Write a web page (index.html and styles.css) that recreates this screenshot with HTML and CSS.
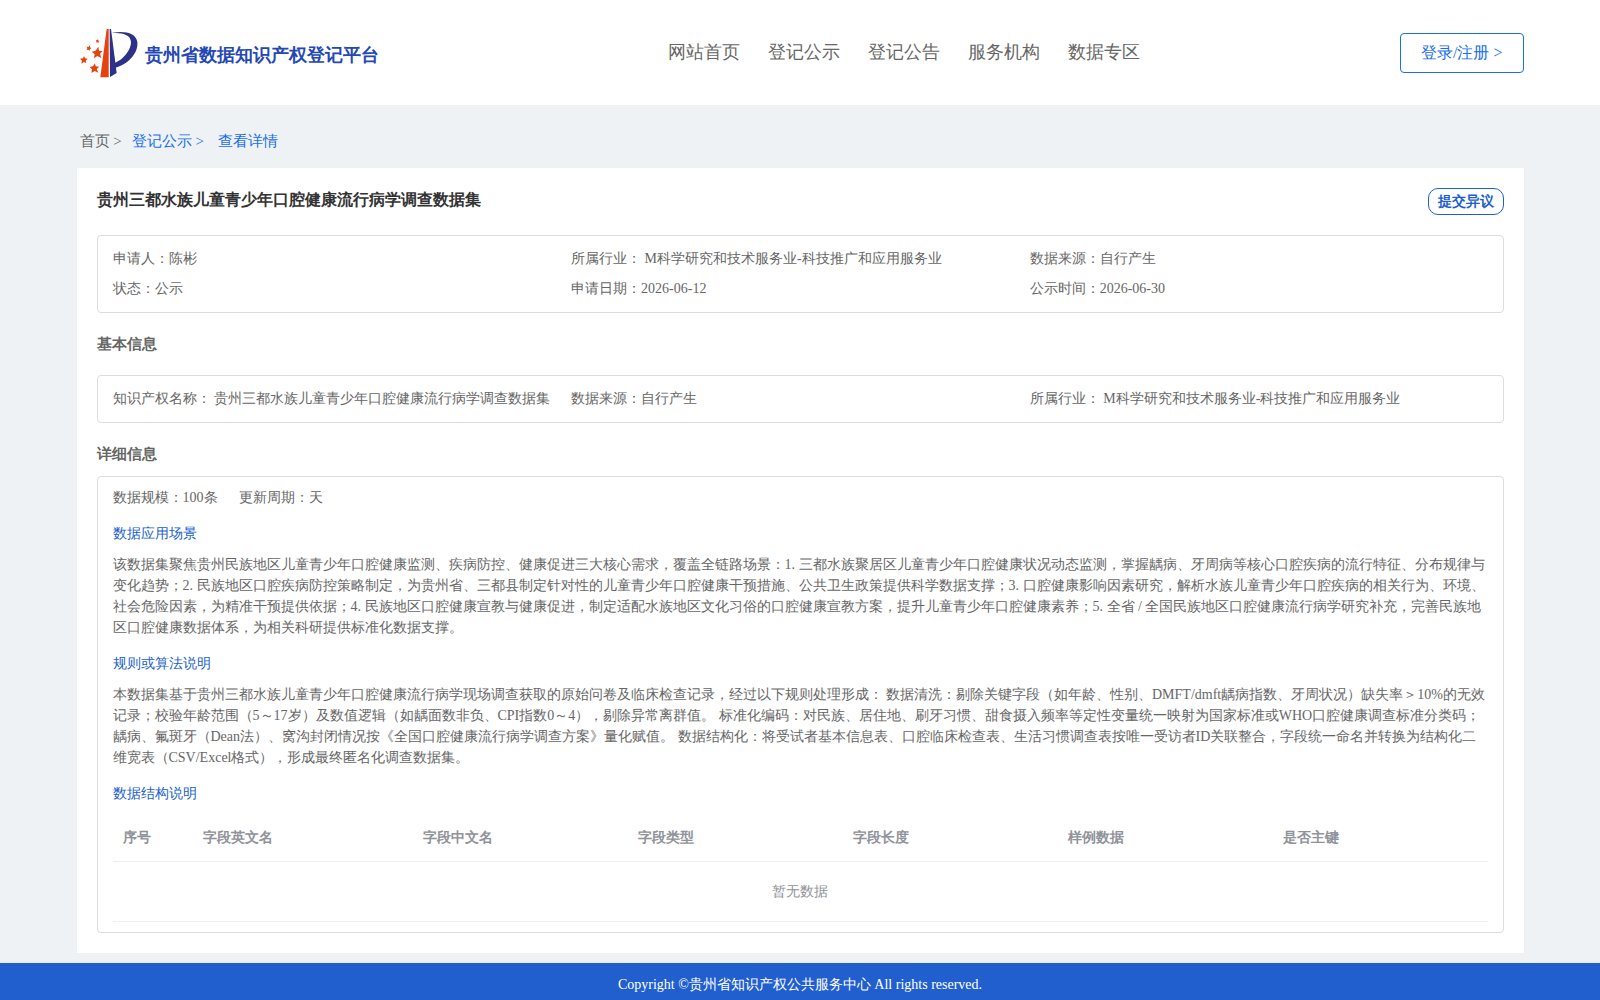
FILE: index.html
```html
<!DOCTYPE html>
<html lang="zh">
<head>
<meta charset="utf-8">
<title>贵州省数据知识产权登记平台</title>
<link rel="stylesheet" href="styles.css">
</head>
<body>
<header class="header">
  <div class="brand">
    <svg class="logo" viewBox="30 24 180 150">
      <path fill="#e5420f" d="M110 27h6v145H91z"/>
      <path fill="#2b3288" d="M119 27h4l17 132-20 12z"/>
      <path fill="#2b3288" d="M128 38C165 32 196 38 202 65C206 99 174 133 134 144V129C162 117 184 88 183 65C181 45 160 37 128 39z"/>
      <g fill="#e5420f">
        <path d="M85 80l2 12 11 1-8 8 4 13-12-6-10 7 2-13-9-7 12-3z"/>
        <path d="M75 130l2 9 11 1-8 7 5 11-11-5-10 6 2-11-7-7 10-2z"/>
        <path d="M42 108l3 7 8 1-6 6 2 8-7-4-8 5 2-9-6-6 9-1z"/>
        <path d="M60 76l0 6 4 3-4 2-1 5-4-3-5 1 2-5-2-5 5 1z"/>
        <path d="M84 58l1 4h3l-2 3v3l-4-1-3 1v-4l-1-3 3-1z"/>
      </g>
    </svg>
    <span class="brand-name">贵州省数据知识产权登记平台</span>
  </div>
  <nav class="nav"><a>网站首页</a><a>登记公示</a><a>登记公告</a><a>服务机构</a><a>数据专区</a></nav>
  <a class="login">登录/注册 &gt;</a>
</header>
<main class="main">
  <div class="crumbs"><span>首页 &gt;</span><a class="crumb-parent">登记公示 &gt;</a><a class="crumb-current">查看详情</a></div>
  <section class="card">
    <div class="card-head"><h1 class="title">贵州三都水族儿童青少年口腔健康流行病学调查数据集</h1><a class="objection">提交异议</a></div>
    <div class="box summary">
      <div>申请人：陈彬</div><div>所属行业： M科学研究和技术服务业-科技推广和应用服务业</div><div>数据来源：自行产生</div>
      <div>状态：公示</div><div>申请日期：2026-06-12</div><div>公示时间：2026-06-30</div>
    </div>
    <h2 class="section basic">基本信息</h2>
    <div class="box summary">
      <div>知识产权名称： 贵州三都水族儿童青少年口腔健康流行病学调查数据集</div><div>数据来源：自行产生</div><div>所属行业： M科学研究和技术服务业-科技推广和应用服务业</div>
    </div>
    <h2 class="section detail">详细信息</h2>
    <div class="box details">
      <div class="scale"><span>数据规模：100条</span><span>更新周期：天</span></div>
      <h3 class="sub">数据应用场景</h3>
      <p class="text">该数据集聚焦贵州民族地区儿童青少年口腔健康监测、疾病防控、健康促进三大核心需求，覆盖全链路场景：1. 三都水族聚居区儿童青少年口腔健康状况动态监测，掌握龋病、牙周病等核心口腔疾病的流行特征、分布规律与变化趋势；2. 民族地区口腔疾病防控策略制定，为贵州省、三都县制定针对性的儿童青少年口腔健康干预措施、公共卫生政策提供科学数据支撑；3. 口腔健康影响因素研究，解析水族儿童青少年口腔疾病的相关行为、环境、社会危险因素，为精准干预提供依据；4. 民族地区口腔健康宣教与健康促进，制定适配水族地区文化习俗的口腔健康宣教方案，提升儿童青少年口腔健康素养；5. 全省 / 全国民族地区口腔健康流行病学研究补充，完善民族地区口腔健康数据体系，为相关科研提供标准化数据支撑。</p>
      <h3 class="sub">规则或算法说明</h3>
      <p class="text">本数据集基于贵州三都水族儿童青少年口腔健康流行病学现场调查获取的原始问卷及临床检查记录，经过以下规则处理形成： 数据清洗：剔除关键字段（如年龄、性别、DMFT/dmft龋病指数、牙周状况）缺失率＞10%的无效记录；校验年龄范围（5～17岁）及数值逻辑（如龋面数非负、CPI指数0～4），剔除异常离群值。 标准化编码：对民族、居住地、刷牙习惯、甜食摄入频率等定性变量统一映射为国家标准或WHO口腔健康调查标准分类码；龋病、氟斑牙（Dean法）、窝沟封闭情况按《全国口腔健康流行病学调查方案》量化赋值。 数据结构化：将受试者基本信息表、口腔临床检查表、生活习惯调查表按唯一受访者ID关联整合，字段统一命名并转换为结构化二维宽表（CSV/Excel格式），形成最终匿名化调查数据集。</p>
      <h3 class="sub">数据结构说明</h3>
      <div class="table">
        <div class="thead"><span>序号</span><span>字段英文名</span><span>字段中文名</span><span>字段类型</span><span>字段长度</span><span>样例数据</span><span>是否主键</span></div>
        <div class="empty">暂无数据</div>
      </div>
    </div>
  </section>
</main>
<footer class="footer">Copyright ©贵州省知识产权公共服务中心 All rights reserved.</footer>
</body>
</html>
```
FILE: styles.css
```css
* { box-sizing: border-box; }
body { margin: 0; height: 1000px; overflow: hidden; background: #eef2f5; color: #666; font-family: "Liberation Serif", serif; font-size: 14px; line-height: 21px; }
h1, h2, h3, p { margin: 0; }
.header { height: 105px; background: #fff; display: grid; grid-template-columns: 588px 1fr 124px; padding: 0 76px 0 80px; align-items: start; }
.brand { display: flex; gap: 5px; padding-top: 28px; }
.logo { width: 60px; height: 50px; flex: none; }
.brand-name { font-size: 18px; font-weight: bold; color: #2448b5; line-height: 26px; padding-top: 14px; }
.nav { display: flex; gap: 28px; font-size: 18px; line-height: 26px; padding-top: 39px; color: #666; }
.login { height: 40px; margin-top: 33px; border: 1px solid #186eed; border-radius: 4px; color: #186eed; font-size: 16px; line-height: 38px; padding-left: 20px; }
.main { padding: 0 76.5px; height: 858px; }
.crumbs { height: 63px; padding: 26px 0 0 3px; font-size: 15px; display: flex; color: #666; }
.crumbs a { color: #186eed; }
.crumb-parent { margin-left: 10px; }
.crumb-current { margin-left: 14.5px; }
.card { height: 785px; background: #fff; padding: 20px 20px 0; }
.card-head { display: flex; justify-content: space-between; height: 47px; align-items: flex-start; }
.title { font-size: 16px; line-height: 24px; color: #333; }
.objection { width: 76px; height: 27px; border: 1px solid #215fce; border-radius: 10px; color: #215fce; font-weight: bold; text-align: center; line-height: 25px; }
.box { border: 1px solid #ddd; border-radius: 4px; padding: 0 15px; }
.summary { display: grid; grid-template-columns: 458.6px 458.6px 1fr; grid-auto-rows: 30px; padding-top: 12px; padding-bottom: 4px; white-space: nowrap; }
.section { font-size: 15px; line-height: 22px; color: #666; }
.basic { height: 62px; padding-top: 20px; }
.detail { height: 53px; padding-top: 20px; }
.details { height: 457px; padding-top: 10px; }
.scale { display: flex; gap: 21px; }
.sub { font-size: 14px; font-weight: normal; line-height: 21px; color: #215fce; margin: 15px 0 10px; }
.table { font-size: 14px; color: #909399; }
.thead { display: grid; grid-template-columns: 80px 220px repeat(5, 215px); height: 48px; border-bottom: 1px solid #ebeef5; font-weight: bold; line-height: 23px; padding: 12px 0 0 10px; overflow: hidden; }
.empty { height: 60px; line-height: 60px; text-align: center; border-bottom: 1px solid #ebeef5; }
.footer { height: 37px; background: #215fce; color: #fff; text-align: center; line-height: 21px; padding-top: 11px; }
```
